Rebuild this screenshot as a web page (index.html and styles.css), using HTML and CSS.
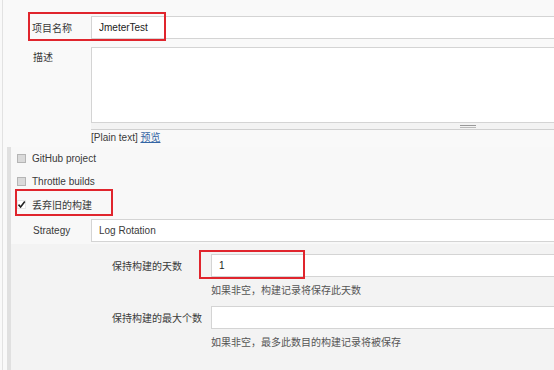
FILE: index.html
```html
<!DOCTYPE html>
<html>
<head>
  <meta charset="UTF-8">
  <title>Job Config</title>
  <link rel="stylesheet" href="styles.css">
</head>
<body>
  <div class="page">
    <div class="row">
      <div class="label">项目名称</div>
      <div class="field"><input type="text" class="text-input" value="JmeterTest"></div>
    </div>

    <div class="row row-top desc-row">
      <div class="label desc-label">描述</div>
      <div class="field">
        <textarea class="textarea"></textarea>
        <div class="textarea-handle"><span class="grip"></span></div>
      </div>
    </div>

    <div class="row plain-row">
      <div class="label"></div>
      <div class="field">[Plain text] <a href="#" class="preview">预览</a></div>
    </div>

    <div class="block">
      <div class="check-row"><span class="checkbox"></span>GitHub project</div>
      <div class="check-row"><span class="checkbox"></span>Throttle builds</div>
      <div class="check-row"><span class="checkbox checked"><svg viewBox="0 0 9 9" width="9" height="9"><path d="M1.5 4.6 L3.6 7 L7.8 1.6" fill="none" stroke="#222" stroke-width="1.6"/></svg></span>丢弃旧的构建</div>

      <div class="row strategy-row">
        <div class="label strategy-label">Strategy</div>
        <div class="field"><div class="select">Log Rotation</div></div>
      </div>

      <div class="inner">
        <div class="row">
          <div class="label inner-label">保持构建的天数</div>
          <div class="field"><input type="text" class="text-input" value="1"></div>
        </div>
        <div class="help">如果非空，构建记录将保存此天数</div>
        <div class="row">
          <div class="label inner-label">保持构建的最大个数</div>
          <div class="field"><input type="text" class="text-input" value=""></div>
        </div>
        <div class="help">如果非空，最多此数目的构建记录将被保存</div>
      </div>
    </div>
  </div>

  <!-- annotation boxes drawn over the form -->
  <div class="mark mark-name"></div>
  <div class="mark mark-discard"></div>
  <div class="mark mark-days"></div>
</body>
</html>
```

FILE: styles.css
```css
body {
  margin: 0;
  background-color: #f9f9f9;
  font-family: "Liberation Sans", "Noto Sans CJK SC", sans-serif;
  font-size: 10px;
  color: #3a3a3a;
  overflow: hidden;
  position: relative;
  height: 370px;
}
.page {
  margin-left: 2px;
  border-left: 1px solid #e2e2e2;
  padding-top: 16px;
  height: 354px;
}
.row {
  display: flex;
  align-items: center;
}
.row-top {
  align-items: flex-start;
}
.label {
  width: 88px;
  flex-shrink: 0;
  padding-left: 29px;
  box-sizing: border-box;
}
.field {
  flex-grow: 1;
}
.text-input {
  display: block;
  width: 100%;
  height: 23px;
  box-sizing: border-box;
  border: 1px solid #d4d4d4;
  border-right: none;
  background-color: #fff;
  padding: 0 7px;
  font-family: inherit;
  font-size: 10px;
  color: #222;
  outline: none;
}
.desc-row {
  margin-top: 8px;
}
.desc-label {
  padding-top: 2px;
  padding-left: 30px;
}
.textarea {
  display: block;
  width: 100%;
  height: 76px;
  box-sizing: border-box;
  border: 1px solid #d4d4d4;
  border-right: none;
  background-color: #fff;
  resize: none;
  margin: 0;
}
.textarea-handle {
  height: 6px;
  border-bottom: 1px solid #d0d0d0;
  background-color: #f3f3f3;
}
.grip {
  display: block;
  margin-left: 369px;
  width: 16px;
  height: 1px;
  position: relative;
  top: 2px;
  border-top: 1px solid #999;
  border-bottom: 1px solid #bbb;
}
.plain-row {
  margin-top: 1px;
  line-height: 13px;
}
.preview {
  color: #3465a4;
}
.block {
  margin-left: 4px;
  margin-top: 3px;
  border-left: 4px solid #e0e0e0;
  background-color: #f8f8f8;
  height: 224px;
}
.check-row {
  display: flex;
  align-items: center;
  height: 23px;
  padding-left: 6px;
}
.checkbox {
  display: inline-block;
  width: 9px;
  height: 9px;
  box-sizing: border-box;
  border: 1px solid #b5b5b5;
  background-color: #dadada;
  margin-right: 6px;
}
.checkbox.checked {
  background-color: #fff;
  border-color: #e6e6e6;
}
.checkbox svg {
  display: block;
  margin: -1px;
}
.strategy-row {
  margin-top: 3px;
}
.strategy-label {
  width: 80px;
  padding-left: 22px;
}
.select {
  height: 23px;
  line-height: 21px;
  box-sizing: border-box;
  border: 1px solid #d4d4d4;
  border-right: none;
  background-color: #fff;
  padding-left: 7px;
}
.inner {
  margin-top: 2px;
  padding-top: 10px;
  background-color: #f3f3f3;
  height: 127px;
  box-sizing: border-box;
}
.inner-label {
  width: 200px;
  padding-left: 101px;
}
.help {
  padding-left: 200px;
  margin: 8px 0 9px;
  line-height: 12px;
  color: #555;
}
.mark {
  position: absolute;
  border: 2px solid #e0252d;
  box-sizing: border-box;
}
.mark-name {
  left: 28px;
  top: 12px;
  width: 138px;
  height: 29px;
}
.mark-discard {
  left: 15px;
  top: 189px;
  width: 98px;
  height: 27px;
}
.mark-days {
  left: 199px;
  top: 250px;
  width: 106px;
  height: 29px;
}
```
